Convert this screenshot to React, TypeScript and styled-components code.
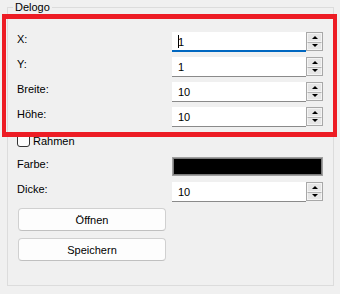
import React from "react";
import styled, { createGlobalStyle } from "styled-components";

const GlobalStyle = createGlobalStyle`
  body {
    margin: 0;
    background: #f0f0f0;
    font-family: "Liberation Sans", Arial, sans-serif;
    font-size: 11px;
    color: #000;
  }
`;

const Window = styled.div`
  position: relative;
  width: 340px;
  height: 294px;
  box-sizing: border-box;
  padding: 0 7px 0 7px;
  background: #f0f0f0;
`;

const GroupBox = styled.fieldset`
  margin: 0;
  padding: 0 0 0 9px;
  width: 327px;
  height: 286px;
  box-sizing: border-box;
  border: 1px solid #dcdcdc;
  min-width: 0;
`;

const Title = styled.legend`
  margin-left: -4px;
  padding: 0 2px;
  line-height: 14px;
`;

const Form = styled.div`
  display: grid;
  grid-template-columns: 155px 151px;
  grid-auto-rows: 20px;
  row-gap: 5px;
  padding-top: 18px;
`;

const Label = styled.div`
  line-height: 14px;
  align-self: start;
`;

const SpinWrap = styled.div`
  display: flex;
  height: 20px;
`;

const Field = styled.div<{ $focused?: boolean }>`
  flex: 1;
  display: flex;
  align-items: center;
  padding-left: 6px;
  background: #fff;
  box-sizing: border-box;
  border-bottom: ${(p) => (p.$focused ? "2px solid #0067c0" : "1px solid #8a8a8a")};
  padding-top: ${(p) => (p.$focused ? "1px" : "0")};
`;

const Caret = styled.span`
  display: inline-block;
  width: 1px;
  height: 13px;
  background: #000;
  margin-right: -1px;
`;

const SpinButtons = styled.div`
  width: 17px;
  height: 19px;
  box-sizing: border-box;
  border: 1px solid #a8a8a8;
  background: #f0f0f0;
  display: flex;
  flex-direction: column;
`;

const SpinBtn = styled.div`
  flex: 1;
  display: flex;
  align-items: center;
  justify-content: center;
  background: #e6e6e6;
  border: 1px solid #f4f4f4;
  & + & {
    border-top: 1px solid #b4b4b4;
  }
`;

const Arrow = styled.span<{ $down?: boolean }>`
  width: 0;
  height: 0;
  border-left: 3px solid transparent;
  border-right: 3px solid transparent;
  ${(p) => (p.$down ? "border-top: 3px solid #000;" : "border-bottom: 3px solid #000;")}
`;

const CheckRow = styled.label`
  grid-column: 1 / -1;
  display: flex;
  align-items: flex-start;
  gap: 3px;
  padding-top: 2px;
  line-height: 14px;
`;

const Check = styled.span`
  width: 13px;
  height: 13px;
  box-sizing: border-box;
  border: 1px solid #333;
  border-radius: 3px;
  background: #fdfdfd;
`;

const ColorBox = styled.div<{ $color: string }>`
  height: 19px;
  box-sizing: border-box;
  border: 1px solid #a0a0a0;
  box-shadow: inset 0 0 0 1px #7c7c7c;
  background: ${(p) => p.$color};
`;

const Buttons = styled.div`
  display: flex;
  flex-direction: column;
  gap: 7px;
  margin: 6px 0 0 1px;
  width: 148px;
`;

const Button = styled.button`
  height: 23px;
  font: inherit;
  color: #000;
  background: #fdfdfd;
  border: 1px solid #d0d0d0;
  border-bottom-color: #c0c0c0;
  border-radius: 4px;
`;

const Highlight = styled.div`
  position: absolute;
  left: 2px;
  top: 14px;
  width: 335px;
  height: 123px;
  box-sizing: border-box;
  border: 4px solid #ed1c24;
  border-top-width: 5px;
  border-bottom-width: 5px;
  pointer-events: none;
`;

function SpinBox({ value, focused }: { value: string; focused?: boolean }) {
  return (
    <SpinWrap>
      <Field $focused={focused}>
        {focused && <Caret />}
        {value}
      </Field>
      <SpinButtons>
        <SpinBtn>
          <Arrow />
        </SpinBtn>
        <SpinBtn>
          <Arrow $down />
        </SpinBtn>
      </SpinButtons>
    </SpinWrap>
  );
}

export default function App() {
  return (
    <Window>
      <GlobalStyle />
      <GroupBox>
        <Title>Delogo</Title>
        <Form>
          <Label>X:</Label>
          <SpinBox value="1" focused />
          <Label>Y:</Label>
          <SpinBox value="1" />
          <Label>Breite:</Label>
          <SpinBox value="10" />
          <Label>Höhe:</Label>
          <SpinBox value="10" />
          <CheckRow>
            <Check />
            Rahmen
          </CheckRow>
          <Label>Farbe:</Label>
          <ColorBox $color="#000" />
          <Label>Dicke:</Label>
          <SpinBox value="10" />
        </Form>
        <Buttons>
          <Button>Öffnen</Button>
          <Button>Speichern</Button>
        </Buttons>
      </GroupBox>
      <Highlight />
    </Window>
  );
}
